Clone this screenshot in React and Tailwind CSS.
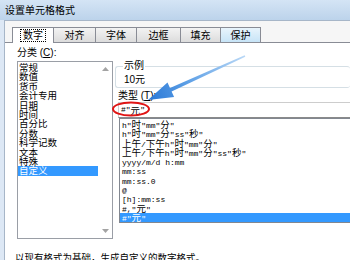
const categories = ["常规", "数值", "货币", "会计专用", "日期", "时间", "百分比", "分数", "科学记数", "文本", "特殊", "自定义"];

const formats = [
  'h"时"mm"分"',
  'h"时"mm"分"ss"秒"',
  '上午/下午h"时"mm"分"',
  '上午/下午h"时"mm"分"ss"秒"',
  "yyyy/m/d h:mm",
  "mm:ss",
  "mm:ss.0",
  "@",
  "[h]:mm:ss",
  '#,"元"',
  '#"元"',
];

const tabs = [
  { label: "数字", w: "w-[42px]" },
  { label: "对齐", w: "w-[43px]" },
  { label: "字体", w: "w-[42px]" },
  { label: "边框", w: "w-[45px]" },
  { label: "填充", w: "w-[41px]" },
  { label: "保护", w: "w-[41px]" },
];

const isCjk = (c) => /[\u3000-\u9fff\uff00-\uffef]/.test(c);

// split a format string into CJK / latin runs so each gets its own font
function Mixed({ text }) {
  const runs = [];
  for (const c of text) {
    const cj = isCjk(c);
    const last = runs[runs.length - 1];
    if (last && last.cj === cj) last.t += c;
    else runs.push({ cj, t: c });
  }
  return runs.map((r, i) =>
    r.cj ? (
      <span key={i} className="text-[9.5px] font-['Noto_Sans_CJK_SC',sans-serif]">
        {r.t}
      </span>
    ) : (
      <span key={i} className="text-[8px] font-['Liberation_Mono',monospace]">
        {r.t}
      </span>
    )
  );
}

function Tab({ label, w, active, hover }) {
  if (active) {
    return (
      <div className={`${w} relative z-10 -mb-px h-[16px] bg-white border border-b-0 border-[#898c95] flex items-center justify-center`}>
        <span className="outline-1 outline-dotted outline-black px-[2px] leading-[11px]">{label}</span>
      </div>
    );
  }
  return (
    <div
      className={`${w} -ml-px h-[15px] border border-b-0 border-[#898c95] flex items-center justify-center ${
        hover ? "bg-[linear-gradient(#e8f4fc,#c7e4f7)] border-[#3c7fb1]" : "bg-[linear-gradient(#f3f3f3,#dcdcdc)]"
      }`}
    >
      {label}
    </div>
  );
}

export default function App() {
  return (
    <div className="w-[350px] h-[260px] overflow-hidden bg-white text-black text-[10px] font-['Liberation_Sans','Noto_Sans_CJK_SC',sans-serif] relative">
      {/* Title bar */}
      <div className="h-[20px] bg-[linear-gradient(#d4e4f5,#bcd3eb)] flex items-center pl-[5px] text-[10px]">
        设置单元格格式
      </div>

      <div className="flex h-[240px]">
        {/* window frame */}
        <div className="w-[5px] bg-[#dde8f5] border-r border-[#a7b6c8]" />

        <div className="flex-1 flex flex-col bg-[#f6f6f6] border-t border-[#a7b6c8] pt-[6px]">
          {/* Tabs */}
          <div className="flex items-end pl-[7px] h-[15px]">
            {tabs.map((t, i) => (
              <Tab key={t.label} {...t} active={i === 0} hover={i === 5} />
            ))}
          </div>

          {/* Tab page */}
          <div className="flex-1 bg-white border-t border-[#898c95] flex flex-col">
            <div className="flex pl-[12px] h-[196px]">
              {/* Category column */}
              <div className="w-[96px] flex flex-col">
                <div className="h-[18px] pt-[4px] leading-[11px]">
                  分类 (<span className="underline">C</span>):
                </div>
                <div className="h-[178px] border border-[#9a9ea6] flex">
                  <div className="flex-1 pt-px">
                    {categories.map((c, i) => (
                      <div
                        key={c}
                        className={`h-[9.4px] leading-[9.4px] text-[9.5px] pl-px font-['Noto_Sans_CJK_SC',sans-serif] ${
                          i === categories.length - 1 ? "bg-[#3399ff] text-white" : ""
                        }`}
                      >
                        {c}
                      </div>
                    ))}
                  </div>
                  <div className="w-[14px] flex flex-col justify-between items-center py-[5px]">
                    <svg width="7" height="4" viewBox="0 0 7 4">
                      <path d="M0 4 L3.5 0 L7 4 Z" fill="#a3a3a3" />
                    </svg>
                    <svg width="7" height="4" viewBox="0 0 7 4">
                      <path d="M0 0 L3.5 4 L7 0 Z" fill="#a3a3a3" />
                    </svg>
                  </div>
                </div>
              </div>

              {/* Right column */}
              <div className="flex-1 ml-[2px] pt-[18px] flex flex-col">
                <fieldset className="h-[27px] border border-[#d5dfe5] rounded-[3px] pl-[8px] border-r-0">
                  <legend className="px-[1px] -ml-[1px] leading-[10px]">示例</legend>
                  <div className="pt-[4px] leading-[10px]">10元</div>
                </fieldset>

                <div className="h-[14px] pt-[2px] pl-[3px] leading-[11px]">
                  类型 (<span className="underline">T</span>):
                </div>

                <div className="ml-[3px] h-[16px] border border-[#cdcdcd] border-b-[#8a8a8a] border-r-0 flex items-center pl-[2px]">
                  <Mixed text={'#"元"'} />
                </div>

                <div className="ml-[4px] h-[105px] border border-[#828790] border-r-0 pt-px">
                  {formats.map((f, i) => (
                    <div
                      key={f}
                      className={`h-[9.3px] leading-[9.3px] pl-[2px] whitespace-nowrap ${
                        i === formats.length - 1 ? "bg-[#3399ff] text-white" : ""
                      }`}
                    >
                      <Mixed text={f} />
                    </div>
                  ))}
                </div>
              </div>
            </div>

            <div className="mt-[12px] pl-[10px] leading-[12px] text-[9.5px] font-['Noto_Sans_CJK_SC',sans-serif] whitespace-nowrap">
              以现有格式为基础，生成自定义的数字格式。
            </div>
          </div>
        </div>
      </div>

      {/* Annotation overlay: red circle and blue arrow */}
      <svg className="absolute left-0 top-0 pointer-events-none" width="350" height="260">
        <defs>
          <linearGradient id="arr" x1="245" y1="56" x2="148" y2="100" gradientUnits="userSpaceOnUse">
            <stop offset="0" stopColor="#b9d8f6" />
            <stop offset="0.6" stopColor="#5c9fe6" />
            <stop offset="1" stopColor="#2a78d6" />
          </linearGradient>
        </defs>
        <ellipse cx="131" cy="109" rx="18" ry="6.5" fill="none" stroke="#e01515" strokeWidth="2" />
        <path
          d="M148 100 L174.1 97 L171.6 91.5 L245.3 56.7 L244.7 55.3 L170 87.9 L167.5 82.4 Z"
          fill="url(#arr)"
        />
      </svg>
    </div>
  );
}
